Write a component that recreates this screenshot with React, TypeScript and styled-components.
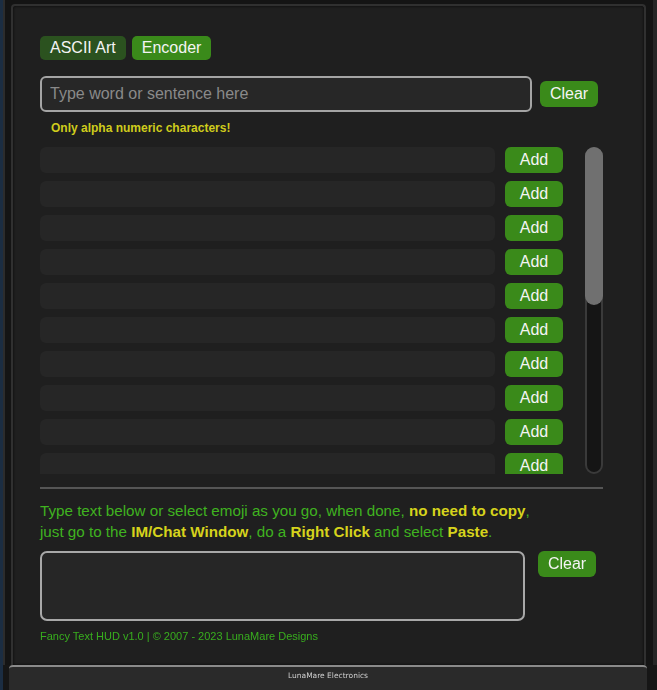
import React, { useState } from "react";
import styled, { createGlobalStyle } from "styled-components";

const GlobalStyle = createGlobalStyle`
  html, body {
    margin: 0;
    padding: 0;
    background: #101214;
  }
  body {
    font-family: "Liberation Sans", Arial, sans-serif;
  }
  * {
    box-sizing: border-box;
  }
`;

const ROWS = 10;

const App = () => {
  const [word, setWord] = useState("");
  const [text, setText] = useState("");

  return (
    <>
      <GlobalStyle />
      <Screen>
        <Frame>
          <Panel>
            <Tabs>
              <TabButton>ASCII Art</TabButton>
              <TabButton active>Encoder</TabButton>
            </Tabs>

            <InputRow>
              <WordInput
                value={word}
                onChange={(e) => setWord(e.target.value)}
                placeholder="Type word or sentence here"
              />
              <GreenButton onClick={() => setWord("")}>Clear</GreenButton>
            </InputRow>
            <Hint>Only alpha numeric characters!</Hint>

            <ListArea>
              <ListViewport>
                {Array.from({ length: ROWS }).map((_, i) => (
                  <ResultRow key={i}>
                    <ResultBar />
                    <GreenButton>Add</GreenButton>
                  </ResultRow>
                ))}
              </ListViewport>
              <ScrollTrack>
                <ScrollThumb />
              </ScrollTrack>
            </ListArea>

            <Divider />

            <Instructions>
              Type text below or select emoji as you go, when done,{" "}
              <Strong>no need to copy</Strong>,
              <br />
              just go to the <Strong>IM/Chat Window</Strong>, do a{" "}
              <Strong>Right Click</Strong> and select <Strong>Paste</Strong>.
            </Instructions>

            <OutputRow>
              <OutputArea
                autoFocus
                value={text}
                onChange={(e) => setText(e.target.value)}
              />
              <GreenButton onClick={() => setText("")}>Clear</GreenButton>
            </OutputRow>

            <Footer>
              Fancy Text HUD v1.0 | © 2007 - 2023 LunaMare Designs
            </Footer>
          </Panel>
        </Frame>
        <BottomBar>LunaMare Electronics</BottomBar>
      </Screen>
    </>
  );
};

export default App;

const Screen = styled.div`
  width: 657px;
  height: 690px;
  display: flex;
  flex-direction: column;
  border-left: 3px solid #1b2d42;
  background: #161616;
  overflow: hidden;
`;

const Frame = styled.div`
  flex: 1;
  padding: 4px 7px 0 6px;
  background: #141414;
  border-left: 2px solid #2c2c2c;
  border-right: 4px solid #262626;
  display: flex;
`;

const Panel = styled.div`
  flex: 1;
  background: #1f1f1f;
  border: 2px solid #303030;
  border-bottom: none;
  border-radius: 4px 4px 0 0;
  box-shadow: inset 0 0 3px rgba(0, 0, 0, 0.8);
  padding: 30px 40px 0 27px;
  display: flex;
  flex-direction: column;
`;

const Tabs = styled.div`
  display: flex;
  gap: 6px;
`;

const TabButton = styled.button<{ active?: boolean }>`
  height: 24px;
  padding: 0 10px;
  border: none;
  border-radius: 5px;
  background: ${(p) => (p.active ? "#3a8a1a" : "#2b521f")};
  color: #f4f4f4;
  font-family: "Liberation Sans", Arial, sans-serif;
  font-size: 16px;
  line-height: 24px;
  cursor: pointer;
`;

const InputRow = styled.div`
  display: flex;
  align-items: center;
  gap: 8px;
  margin-top: 16px;
`;

const WordInput = styled.input`
  width: 492px;
  height: 36px;
  padding: 0 8px;
  background: #272727;
  border: 2px solid #a4a4a4;
  border-radius: 6px;
  color: #e8e8e8;
  font-family: "Liberation Sans", Arial, sans-serif;
  font-size: 16px;
  outline: none;

  &::placeholder {
    color: #8a8a8a;
  }
`;

const GreenButton = styled.button`
  width: 58px;
  height: 26px;
  padding: 0;
  border: none;
  border-radius: 6px;
  background: #3a8a1a;
  color: #f4f4f4;
  font-family: "Liberation Sans", Arial, sans-serif;
  font-size: 16px;
  line-height: 26px;
  cursor: pointer;
  flex-shrink: 0;
`;

const Hint = styled.div`
  margin: 9px 0 0 11px;
  color: #cfcc1c;
  font-size: 12px;
  font-weight: bold;
  line-height: 14px;
`;

const ListArea = styled.div`
  margin-top: 12px;
  height: 327px;
  display: flex;
  gap: 22px;
`;

const ListViewport = styled.div`
  width: 523px;
  height: 100%;
  overflow: hidden;
  display: flex;
  flex-direction: column;
  gap: 8px;
`;

const ScrollTrack = styled.div`
  width: 18px;
  height: 100%;
  background: #151515;
  border: 2px solid #3a3a3a;
  border-radius: 9px;
`;

const ScrollThumb = styled.div`
  margin: -2px;
  height: 158px;
  background: #707070;
  border-radius: 9px;
`;

const ResultRow = styled.div`
  display: flex;
  align-items: center;
  gap: 10px;
  flex-shrink: 0;
`;

const ResultBar = styled.div`
  width: 455px;
  height: 26px;
  border-radius: 6px;
  background: #262626;
`;

const Divider = styled.hr`
  width: 563px;
  margin: 13px 0 0;
  border: none;
  height: 2px;
  background: #555555;
`;

const Instructions = styled.p`
  margin: 11px 0 0;
  color: #3fb31f;
  font-size: 15.2px;
  line-height: 21px;
`;

const Strong = styled.b`
  color: #d6d31c;
`;

const OutputRow = styled.div`
  display: flex;
  align-items: flex-start;
  gap: 13px;
  margin-top: 9px;
`;

const OutputArea = styled.textarea`
  width: 485px;
  height: 70px;
  padding: 6px 8px;
  background: #262626;
  border: 2px solid #a8a8a8;
  border-radius: 7px;
  color: #e8e8e8;
  caret-color: #dddddd;
  font-family: "Liberation Sans", Arial, sans-serif;
  font-size: 16px;
  resize: none;
  outline: none;
`;

const Footer = styled.div`
  margin-top: 9px;
  color: #38ae1e;
  font-size: 11px;
  line-height: 13px;
`;

const BottomBar = styled.div`
  height: 25px;
  margin: 0 10px 0 6px;
  background: #2a2a2a;
  border-top: 2px solid #8a8a8a;
  border-radius: 4px 4px 0 0;
  color: #cfcfcf;
  font-family: "DejaVu Sans", Verdana, sans-serif;
  font-size: 7.5px;
  text-align: center;
  line-height: 18px;
`;
